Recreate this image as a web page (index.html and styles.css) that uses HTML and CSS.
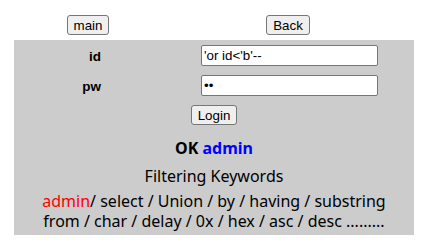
FILE: index.html
```html
<!doctype html>
<html>
  <head>
    <title>Login</title>
    <link rel="stylesheet" href="styles.css">
  </head>
  <body>
    <div class="nav">
      <div class="nav-cell"><button class="btn">main</button></div>
      <div class="nav-cell"><button class="btn">Back</button></div>
    </div>
    <div class="panel">
      <div class="form-row">
        <div class="label">id</div>
        <div class="field"><input type="text" class="text-input" value="'or id<'b'--" /></div>
      </div>
      <div class="form-row">
        <div class="label">pw</div>
        <div class="field"><input type="password" class="text-input" value="12" /></div>
      </div>
      <div class="submit-row"><button class="btn">Login</button></div>
      <div class="result">OK <span class="user">admin</span></div>
      <div class="filter-title">Filtering Keywords</div>
      <div class="filter-list">
        <span class="hit">admin</span>/ select / Union / by / having / substring<br />
        from / char / delay / 0x / hex / asc / desc .........
      </div>
    </div>
  </body>
</html>
```

FILE: styles.css
```css
* {
  box-sizing: border-box;
}

body {
  margin: 0;
  padding: 15px 12px 0 14px;
  background: #fff;
  font-family: "Liberation Sans", Arial, sans-serif;
  font-size: 13px;
  color: #000;
}

.nav {
  display: flex;
  width: 400px;
}

.nav-cell {
  display: flex;
  justify-content: center;
}

.nav-cell:first-child {
  flex: 0 0 148px;
}

.nav-cell:last-child {
  flex: 0 0 252px;
}

.btn {
  font-family: "Liberation Sans", Arial, sans-serif;
  font-size: 13.33px;
  height: 20px;
  padding: 0 6px;
  background: #efefef;
  border: 1px solid #767676;
  border-radius: 3px;
  color: #000;
}

.panel {
  width: 400px;
  margin-top: 5px;
  padding-top: 5px;
  padding-bottom: 4px;
  background: #cccccc;
  text-align: center;
}

.form-row {
  display: grid;
  grid-template-columns: 164px 1fr;
  align-items: start;
  height: 30px;
}

.label {
  font-weight: bold;
  font-size: 13.5px;
  line-height: 15px;
  text-align: right;
  padding-top: 4px;
  padding-right: 77px;
}

.field {
  text-align: left;
  padding-left: 23px;
  height: 30px;
}

.text-input {
  width: 177px;
  height: 21px;
  padding: 1px 2px;
  border: 1px solid #767676;
  border-radius: 2px;
  background: #fff;
  font-family: "Liberation Sans", Arial, sans-serif;
  font-size: 13.33px;
  color: #000;
}

.submit-row {
  height: 30px;
}

.result {
  font-family: "Noto Sans", sans-serif;
  font-weight: bold;
  font-size: 16px;
  line-height: 26px;
}

.user {
  color: #0000ff;
}

.filter-title,
.filter-list {
  font-family: "Noto Sans", sans-serif;
  font-size: 16px;
}

.filter-title {
  line-height: 30px;
}

.filter-list {
  line-height: 20px;
}

.hit {
  color: #ff0000;
}
```
